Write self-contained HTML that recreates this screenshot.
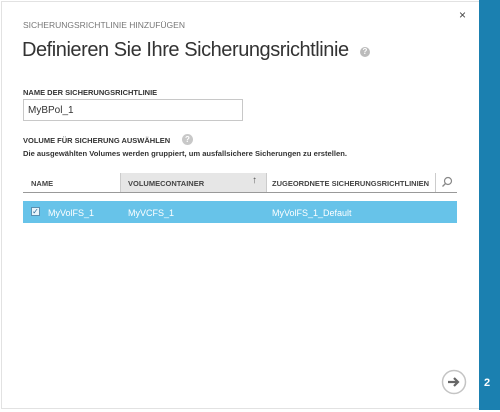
<!DOCTYPE html><html><head><style>
body{margin:0;width:500px;height:412px;background:#fff;font-family:"Liberation Sans",sans-serif;position:relative;overflow:hidden}
.abs{position:absolute;white-space:nowrap}
.frame{left:1px;top:1px;width:478px;height:408px;border:1px solid #e2e2e2;border-right:none;box-sizing:border-box}
.bar{left:479px;top:0;width:21px;height:410px;background:#1b80b0}
.lbl{font-size:7.5px;font-weight:bold;color:#333}
</style></head><body>
<div class="abs frame"></div>
<div class="abs bar"></div>
<div class="abs" style="left:484px;top:377px;color:#fff;font-size:11px;font-weight:bold">2</div>
<div class="abs" style="left:459px;top:8px;color:#444;font-size:12px">×</div>
<div class="abs" style="left:23px;top:20px;color:#777;font-size:8.5px">SICHERUNGSRICHTLINIE HINZUFÜGEN</div>
<div class="abs" style="left:22px;top:39px;color:#333;font-size:20px;font-weight:300;letter-spacing:-0.45px">Definieren Sie Ihre Sicherungsrichtlinie</div>
<div class="abs" style="left:360px;top:47px;width:10px;height:10px;border-radius:50%;background:#bbb;color:#fff;font-size:8px;text-align:center;line-height:10px;font-weight:bold">?</div>
<div class="abs lbl" style="left:23px;top:88px">NAME DER SICHERUNGSRICHTLINIE</div>
<div class="abs" style="left:23px;top:99px;width:220px;height:22px;border:1px solid #c8c8c8;box-sizing:border-box;font-size:10px;color:#333;padding:5px 0 0 4px">MyBPol_1</div>
<div class="abs lbl" style="left:23px;top:136px">VOLUME FÜR SICHERUNG AUSWÄHLEN</div>
<div class="abs" style="left:182px;top:134px;width:11px;height:11px;border-radius:50%;background:#c8c8c8;color:#fff;font-size:8px;text-align:center;line-height:11px;font-weight:bold">?</div>
<div class="abs" style="left:23px;top:149px;font-size:7.6px;font-weight:bold;color:#333">Die ausgewählten Volumes werden gruppiert, um ausfallsichere Sicherungen zu erstellen.</div>
<div class="abs" style="left:120px;top:173px;width:145px;height:19px;background:#e6e6e6;border-left:1px solid #ccc;border-right:1px solid #ccc"></div>
<div class="abs" style="left:435px;top:173px;width:1px;height:19px;background:#ccc"></div>
<div class="abs" style="left:23px;top:192px;width:434px;height:1px;background:#999"></div>
<div class="abs lbl" style="left:31px;top:179px;color:#444">NAME</div>
<div class="abs lbl" style="left:128px;top:179px;color:#444">VOLUMECONTAINER</div>
<div class="abs" style="left:252px;top:175px;font-size:10px;color:#555;font-weight:bold">↑</div>
<div class="abs lbl" style="left:272px;top:179px;color:#444">ZUGEORDNETE SICHERUNGSRICHTLINIEN</div>
<svg class="abs" style="left:441px;top:176px" width="12" height="12"><circle cx="7" cy="5" r="3.5" fill="none" stroke="#888" stroke-width="1.2"/><line x1="4.5" y1="7.5" x2="1.5" y2="10.5" stroke="#888" stroke-width="1.3"/></svg>
<div class="abs" style="left:23px;top:201px;width:434px;height:22px;background:#67c3e9"></div>
<div class="abs" style="left:31px;top:207px;width:9px;height:9px;background:#e8f4fa;border:1px solid #5a8fb0;box-sizing:border-box;font-size:8px;line-height:8px;color:#2a6a9a;text-align:center">✓</div>
<div class="abs" style="left:48px;top:208px;font-size:9px;color:#fff">MyVolFS_1</div>
<div class="abs" style="left:128px;top:208px;font-size:9px;color:#fff">MyVCFS_1</div>
<div class="abs" style="left:272px;top:208px;font-size:9px;color:#fff">MyVolFS_1_Default</div>
<svg class="abs" style="left:441px;top:369px" width="26" height="26"><circle cx="13" cy="13" r="11.5" fill="#fff" stroke="#c4c4c4" stroke-width="1.5"/><path d="M7 13h10M13 9l4 4-4 4" fill="none" stroke="#666" stroke-width="2.2"/></svg>
</body></html>
